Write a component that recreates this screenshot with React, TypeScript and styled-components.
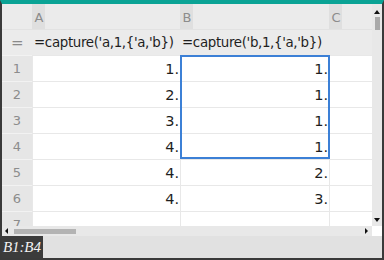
import React from "react";
import styled, { createGlobalStyle } from "styled-components";

const GlobalStyle = createGlobalStyle`
  html, body {
    margin: 0;
    padding: 0;
    background: #ffffff;
  }
`;

const Frame = styled.div`
  width: 384px;
  height: 260px;
  box-sizing: border-box;
  border-top: 4px solid #0aa395;
  border-left: 2px solid #3a3a3a;
  border-right: 2px solid #3a3a3a;
  border-bottom: 2px solid #3a3a3a;
  display: flex;
  flex-direction: column;
  overflow: hidden;
  font-family: "DejaVu Sans", Verdana, sans-serif;
`;

const Main = styled.div`
  display: flex;
  flex-direction: row;
  height: 222px;
`;

const Sheet = styled.div`
  position: relative;
  width: 370px;
  overflow: hidden;
  display: grid;
  grid-template-columns: 30px 148px 149px 43px;
  grid-auto-rows: 26px;
  grid-template-rows: 25px 26px;
  align-content: start;
  background: #ffffff;
`;

const ColHead = styled.div`
  background: #ebebeb;
  display: flex;
  align-items: center;
`;

const ColLetter = styled.span`
  height: 100%;
  width: 13px;
  background: #dfdfdf;
  color: #8c8c8c;
  font-size: 13px;
  display: flex;
  align-items: center;
  justify-content: center;
  padding-left: 1px;
  padding-top: 2px;
  box-sizing: border-box;
`;

const FormulaCell = styled.div<{ $first?: boolean }>`
  background: #ebebeb;
  color: #1e1e1e;
  font-size: 13.4px;
  letter-spacing: -0.35px;
  display: flex;
  align-items: center;
  justify-content: ${(p) => (p.$first ? "center" : "flex-start")};
  padding-left: ${(p) => (p.$first ? "0" : "2px")};
  white-space: nowrap;
  overflow: hidden;
  border-top: 1px solid #e2e2e2;
  box-sizing: border-box;
`;

const Equals = styled.span`
  color: #8a8a8a;
  font-size: 15px;
`;

const RowNum = styled.div`
  background: #e6e6e6;
  color: #8c8c8c;
  font-size: 13px;
  display: flex;
  align-items: center;
  justify-content: center;
  border-top: 1px solid #f2f2f2;
  box-sizing: border-box;
`;

const Cell = styled.div`
  border-top: 1px solid #e8e8e8;
  border-left: 1px solid #e8e8e8;
  box-sizing: border-box;
  display: flex;
  align-items: center;
  justify-content: flex-end;
  padding-right: 1px;
  padding-top: 1px;
  color: #1e1e1e;
  font-size: 14.5px;
`;

const Selection = styled.div`
  position: absolute;
  left: 178px;
  top: 51px;
  width: 150px;
  height: 104px;
  box-sizing: border-box;
  border: 2px solid #3c80d6;
  pointer-events: none;
`;

const VScroll = styled.div`
  width: 10px;
  background: #e8e8e8;
  display: flex;
  flex-direction: column;
  align-items: center;
  padding-top: 6px;
  box-sizing: border-box;
`;

const Arrow = styled.div<{ $dir: "up" | "down" | "left" | "right" }>`
  width: 0;
  height: 0;
  ${(p) =>
    p.$dir === "up"
      ? "border-left: 3px solid transparent; border-right: 3px solid transparent; border-bottom: 4px solid #111;"
      : p.$dir === "down"
      ? "border-left: 3px solid transparent; border-right: 3px solid transparent; border-top: 4px solid #111;"
      : p.$dir === "left"
      ? "border-top: 3px solid transparent; border-bottom: 3px solid transparent; border-right: 3px solid #111;"
      : "border-top: 3px solid transparent; border-bottom: 3px solid transparent; border-left: 3px solid #111;"}
`;

const VThumb = styled.div`
  width: 5px;
  height: 13px;
  margin-top: 3px;
  background: #a9a9a9;
`;

const Spacer = styled.div<{ $fixed?: number }>`
  flex: ${(p) => (p.$fixed ? `0 0 ${p.$fixed}px` : "1")};
`;

const HRow = styled.div`
  display: flex;
  height: 10px;
`;

const HScroll = styled.div`
  width: 370px;
  background: #e8e8e8;
  display: flex;
  align-items: center;
  padding-left: 3px;
  padding-right: 4px;
  box-sizing: border-box;
`;

const HThumb = styled.div`
  width: 62px;
  height: 5px;
  margin-left: 6px;
  background: #b3b3b3;
`;

const Corner = styled.div`
  width: 10px;
  background: #ffffff;
`;

const Status = styled.div`
  flex: 1;
  background: #e1e1e1;
  display: flex;
  margin-left: -2px;
`;

const RangeLabel = styled.div`
  background: #3b3b3b;
  color: #f2f2f2;
  font-family: "Liberation Serif", "Times New Roman", serif;
  font-style: italic;
  font-size: 15px;
  display: flex;
  align-items: center;
  padding: 1px 2px 0 3px;
  letter-spacing: -0.1px;
`;

const colA = [1, 2, 3, 4, 4, 4, null];
const colB = [1, 1, 1, 1, 2, 3, null];

export default function App() {
  return (
    <>
      <GlobalStyle />
      <Frame>
        <Main>
          <Sheet>
            <ColHead />
            <ColHead>
              <ColLetter>A</ColLetter>
            </ColHead>
            <ColHead>
              <ColLetter>B</ColLetter>
            </ColHead>
            <ColHead>
              <ColLetter>C</ColLetter>
            </ColHead>
            <FormulaCell $first>
              <Equals>=</Equals>
            </FormulaCell>
            <FormulaCell>=capture('a,1,{"{"}'a,'b{"}"})</FormulaCell>
            <FormulaCell>=capture('b,1,{"{"}'a,'b{"}"})</FormulaCell>
            <FormulaCell />
            {colA.map((a, i) => (
              <React.Fragment key={i}>
                <RowNum>{i + 1}</RowNum>
                <Cell>{a !== null ? `${a}.` : ""}</Cell>
                <Cell>{colB[i] !== null ? `${colB[i]}.` : ""}</Cell>
                <Cell />
              </React.Fragment>
            ))}
            <Selection />
          </Sheet>
          <VScroll>
            <Arrow $dir="up" />
            <VThumb />
            <Spacer />
            <Arrow $dir="down" />
            <Spacer $fixed={4} />
          </VScroll>
        </Main>
        <HRow>
          <HScroll>
            <Arrow $dir="left" />
            <HThumb />
            <Spacer />
            <Arrow $dir="right" />
          </HScroll>
          <Corner />
        </HRow>
        <Status>
          <RangeLabel>B1:B4</RangeLabel>
        </Status>
      </Frame>
    </>
  );
}
